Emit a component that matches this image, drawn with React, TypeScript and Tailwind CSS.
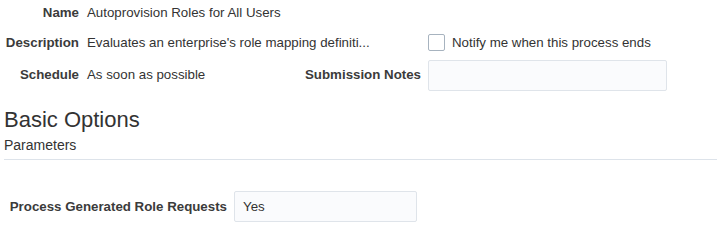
export default function App() {
  return (
    <div className="w-[717px] h-[245px] bg-white font-['Liberation_Sans',Arial,sans-serif] text-[13.3px] text-[#333]">
      {/* process header */}
      <div className="grid grid-cols-[87px_218px_123px_239px] grid-rows-[25px_31px_31px] gap-y-[2px] items-center">
        <div className="pr-2 text-right font-bold text-[#3b3b3b]">Name</div>
        <div className="col-span-3">Autoprovision Roles for All Users</div>

        <div className="pr-2 text-right font-bold text-[#3b3b3b]">Description</div>
        <div className="col-span-2 whitespace-nowrap">Evaluates an enterprise's role mapping definiti...</div>
        <label className="flex items-center gap-[7px] whitespace-nowrap">
          <span className="w-[17px] h-[17px] rounded-[2px] border border-[#a7b3bf] bg-white" />
          <span>Notify me when this process ends</span>
        </label>

        <div className="pr-2 pb-[2px] text-right font-bold text-[#3b3b3b]">Schedule</div>
        <div className="pb-[2px]">As soon as possible</div>
        <div className="pr-[10px] pb-[2px] text-right font-bold text-[#3b3b3b] whitespace-nowrap">Submission Notes</div>
        <div className="h-[31px] rounded-[2px] border border-[#dfe4ea] bg-[#fafbfd]" />
      </div>

      <h2 className="mt-[16px] pl-[4px] text-[22px] leading-[26px] text-[#333]">Basic Options</h2>
      <div className="mt-[4px] ml-[4px] pb-[6px] border-b border-[#dde3ea] text-[14px] leading-[16px] text-[#333]">
        Parameters
      </div>

      <div className="mt-[31px] flex items-center h-[31px] gap-[7px]">
        <div className="w-[227px] text-right font-bold text-[#3b3b3b] whitespace-nowrap">Process Generated Role Requests</div>
        <div className="w-[183px] h-[31px] flex items-center px-[8px] rounded-[2px] border border-[#dfe4ea] bg-[#fafbfd]">
          Yes
        </div>
      </div>
    </div>
  );
}
